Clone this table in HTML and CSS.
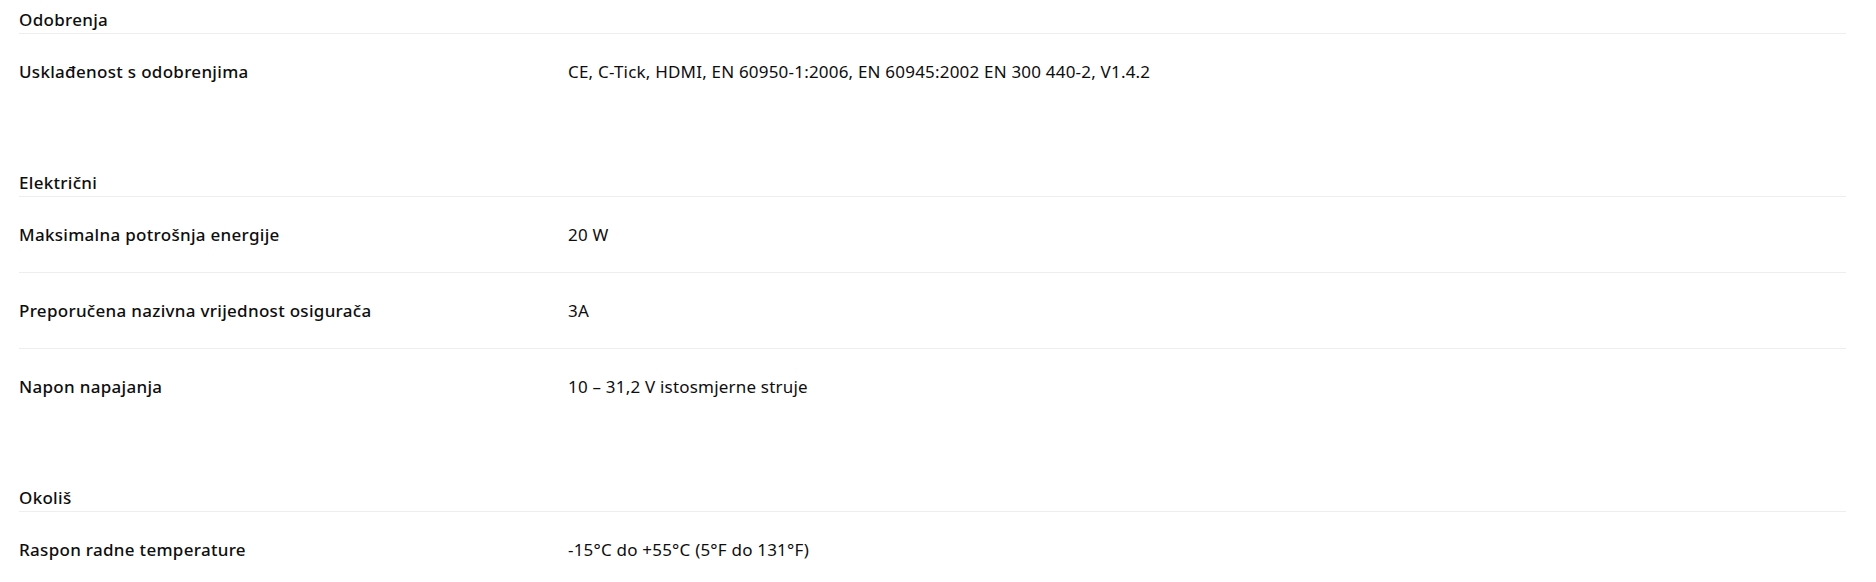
FILE: index.html
```html
<!DOCTYPE html>
<html lang="hr">
<head>
<meta charset="utf-8">
<title>Specifikacije</title>
<link rel="stylesheet" href="styles.css">
</head>
<body>
<div class="specs">
  <section class="spec-group">
    <h3 class="group-title">Odobrenja</h3>
    <dl class="spec-list">
      <div class="spec-row">
        <dt class="spec-label">Usklađenost s odobrenjima</dt>
        <dd class="spec-value">CE, C-Tick, HDMI, EN 60950-1:2006, EN 60945:2002 EN 300 440-2, V1.4.2</dd>
      </div>
    </dl>
  </section>
  <section class="spec-group">
    <h3 class="group-title">Električni</h3>
    <dl class="spec-list">
      <div class="spec-row">
        <dt class="spec-label">Maksimalna potrošnja energije</dt>
        <dd class="spec-value">20 W</dd>
      </div>
      <div class="spec-row">
        <dt class="spec-label">Preporučena nazivna vrijednost osigurača</dt>
        <dd class="spec-value">3A</dd>
      </div>
      <div class="spec-row">
        <dt class="spec-label">Napon napajanja</dt>
        <dd class="spec-value">10 – 31,2 V istosmjerne struje</dd>
      </div>
    </dl>
  </section>
  <section class="spec-group">
    <h3 class="group-title">Okoliš</h3>
    <dl class="spec-list">
      <div class="spec-row">
        <dt class="spec-label">Raspon radne temperature</dt>
        <dd class="spec-value">-15°C do +55°C (5°F do 131°F)</dd>
      </div>
    </dl>
  </section>
</div>
</body>
</html>
```

FILE: styles.css
```css
html, body {
  background: #ffffff;
}
body {
  margin: 8px 30px 8px 19px;
  font-family: "Noto Sans", "Open Sans", sans-serif;
  font-size: 17px;
  color: #0e0e0e;
}
.specs {
  display: flex;
  flex-direction: column;
}
.spec-group + .spec-group {
  margin-top: 62px;
}
.group-title {
  margin: 0;
  font-size: 17px;
  font-weight: 500;
  line-height: 24px;
  letter-spacing: 0.3px;
  padding-bottom: 1px;
  border-bottom: 1px solid #eeeeee;
}
.spec-list {
  margin: 0;
}
.spec-row {
  display: grid;
  grid-template-columns: 549px 1fr;
  padding: 26px 0 25px;
  line-height: 24px;
}
.spec-row + .spec-row {
  border-top: 1px solid #eeeeee;
}
.spec-label {
  font-weight: 500;
  letter-spacing: 0.3px;
}
.spec-value {
  margin: 0;
  font-weight: 400;
  letter-spacing: 0.2px;
}
```
